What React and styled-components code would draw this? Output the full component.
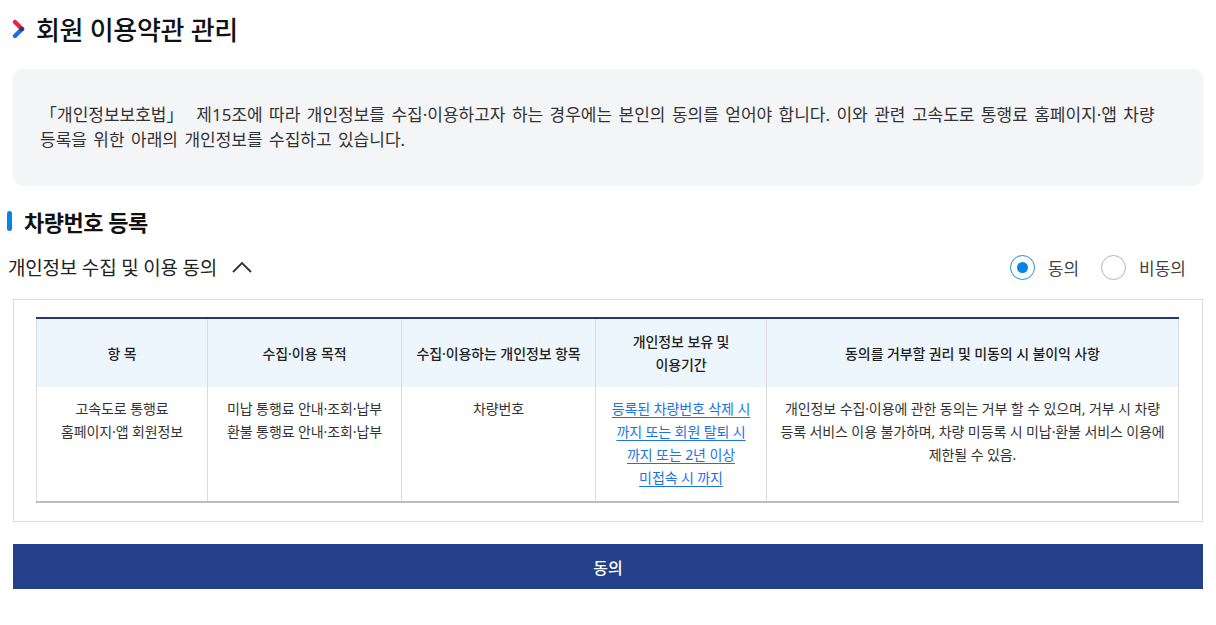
import React from 'react';
import styled, { createGlobalStyle } from 'styled-components';

const GlobalStyle = createGlobalStyle`
  * { box-sizing: border-box; }
  body {
    margin: 0;
    background: #fff;
    font-family: "Noto Sans", "Noto Sans CJK KR", sans-serif;
    color: #222;
    word-break: keep-all;
  }
`;

const Page = styled.div`
  width: 1216px;
  padding: 12px 7px 36px 7px;
`;

const Title = styled.h1`
  display: flex;
  align-items: center;
  gap: 10px;
  margin: 0 0 0 5px;
  height: 34px;
  font-size: 26px;
  font-weight: 500;
  color: #111;
  letter-spacing: -0.3px;
`;

const InfoBox = styled.div`
  margin: 23px 6px 0;
  padding: 33px 28px 34px 27px;
  background: #f4f5f7;
  border-radius: 10px;
  font-size: 17px;
  line-height: 25px;
  color: #333;
  letter-spacing: 0;
  word-spacing: 2px;
`;

const SectionTitle = styled.h2`
  display: flex;
  align-items: center;
  gap: 12px;
  margin: 20px 0 0;
  font-size: 22px;
  font-weight: 700;
  color: #111;
  letter-spacing: -0.5px;
  height: 30px;

  &::before {
    content: '';
    width: 5px;
    height: 20px;
    border-radius: 3px;
    background: #0a84e0;
  }
`;

const ConsentRow = styled.div`
  display: flex;
  align-items: center;
  justify-content: space-between;
  margin-top: 15px;
  height: 32px;
  padding-right: 23px;
`;

const ToggleLabel = styled.button`
  display: flex;
  align-items: center;
  gap: 14px;
  padding: 0 0 0 1px;
  border: 0;
  background: none;
  font-family: inherit;
  font-size: 19px;
  color: #222;
  letter-spacing: -0.2px;
  cursor: pointer;
`;

const RadioGroup = styled.div`
  display: flex;
  align-items: center;
  gap: 22px;
`;

const RadioLabel = styled.label`
  display: flex;
  align-items: center;
  gap: 13px;
  font-size: 17px;
  color: #444;
  cursor: pointer;
`;

const RadioDot = styled.span`
  width: 25px;
  height: 25px;
  border-radius: 50%;
  border: 1px solid ${p => (p.$checked ? '#1e8fe6' : '#b5b5b5')};
  display: flex;
  align-items: center;
  justify-content: center;
  background: #fff;

  &::after {
    content: '';
    width: 11px;
    height: 11px;
    border-radius: 50%;
    background: ${p => (p.$checked ? '#0a84e0' : 'transparent')};
  }
`;

const TableBox = styled.div`
  margin: 16px 6px 0;
  border: 1px solid #dcdcdc;
  padding: 17px 23px 18px 22px;
`;

const Table = styled.table`
  width: 100%;
  border-collapse: collapse;
  border-top: 2px solid #26386f;
  border-bottom: 2px solid #bdbdbd;
  table-layout: fixed;
  font-size: 14px;
  letter-spacing: -0.1px;
`;

const Th = styled.th`
  height: 69px;
  background: #eef6fd;
  font-weight: 500;
  color: #222;
  line-height: 23px;
  border-left: 1px solid #dcdcdc;
  border-right: 1px solid #dcdcdc;
  padding: 0 10px;
`;

const Td = styled.td`
  height: 115px;
  vertical-align: top;
  text-align: center;
  color: #333;
  line-height: 23px;
  padding: 10px ${p => p.$pad || 12}px 0;
  border-left: 1px solid #dcdcdc;
  border-right: 1px solid #dcdcdc;
`;

const LinkText = styled.a`
  color: #1a73e8;
  text-decoration: underline;
  text-underline-offset: 3px;
`;

const SubmitButton = styled.button`
  display: block;
  width: calc(100% - 12px);
  margin: 22px 6px 0;
  height: 45px;
  border: 0;
  background: #25408a;
  color: #fff;
  font-family: inherit;
  font-size: 16px;
  font-weight: 500;
  cursor: pointer;
`;

const Chevron = () => (
  <svg width="14" height="20" viewBox="0 0 14 20">
    <line x1="3" y1="3" x2="10" y2="10" stroke="#e8273d" strokeWidth="4.4" strokeLinecap="round" />
    <line x1="10" y1="10" x2="3" y2="17" stroke="#1d6fdc" strokeWidth="4.4" strokeLinecap="round" />
    <circle cx="9.6" cy="10" r="2.3" fill="#29318a" />
  </svg>
);

const ChevronUp = () => (
  <svg width="22" height="14" viewBox="0 0 22 14" fill="none">
    <polyline points="2,12 11,3 20,12" stroke="#333" strokeWidth="1.8" />
  </svg>
);

const columns = [
  { w: 171, head: '항 목' },
  { w: 194, head: '수집·이용 목적' },
  { w: 194, head: '수집·이용하는 개인정보 항목' },
  { w: 171, head: <>개인정보 보유 및<br />이용기간</> },
  { w: 412, head: '동의를 거부할 권리 및 미동의 시 불이익 사항' },
];

export default function App() {
  const [agree, setAgree] = React.useState(true);

  return (
    <Page>
      <GlobalStyle />
      <Title>
        <Chevron />
        회원 이용약관 관리
      </Title>

      <InfoBox>
        「개인정보보호법」&nbsp; 제15조에 따라 개인정보를 수집·이용하고자 하는 경우에는 본인의 동의를 얻어야 합니다. 이와 관련 고속도로 통행료 홈페이지·앱 차량 등록을 위한 아래의 개인정보를 수집하고 있습니다.
      </InfoBox>

      <SectionTitle>차량번호 등록</SectionTitle>

      <ConsentRow>
        <ToggleLabel type="button">
          개인정보 수집 및 이용 동의
          <ChevronUp />
        </ToggleLabel>
        <RadioGroup>
          <RadioLabel onClick={() => setAgree(true)}>
            <RadioDot $checked={agree} />
            동의
          </RadioLabel>
          <RadioLabel onClick={() => setAgree(false)}>
            <RadioDot $checked={!agree} />
            비동의
          </RadioLabel>
        </RadioGroup>
      </ConsentRow>

      <TableBox>
        <Table>
          <colgroup>
            {columns.map((c, i) => (
              <col key={i} style={{ width: c.w }} />
            ))}
          </colgroup>
          <thead>
            <tr>
              {columns.map((c, i) => (
                <Th key={i}>{c.head}</Th>
              ))}
            </tr>
          </thead>
          <tbody>
            <tr>
              <Td>고속도로 통행료<br />홈페이지·앱 회원정보</Td>
              <Td>미납 통행료 안내·조회·납부<br />환불 통행료 안내·조회·납부</Td>
              <Td>차량번호</Td>
              <Td $pad={14}>
                <LinkText href="#">등록된 차량번호 삭제 시 까지 또는 회원 탈퇴 시 까지 또는 2년 이상 미접속 시 까지</LinkText>
              </Td>
              <Td $pad={8}>
                개인정보 수집·이용에 관한 동의는 거부 할 수 있으며, 거부 시 차량 등록 서비스 이용 불가하며, 차량 미등록 시 미납·환불 서비스 이용에 제한될 수 있음.
              </Td>
            </tr>
          </tbody>
        </Table>
      </TableBox>

      <SubmitButton type="button">동의</SubmitButton>
    </Page>
  );
}
